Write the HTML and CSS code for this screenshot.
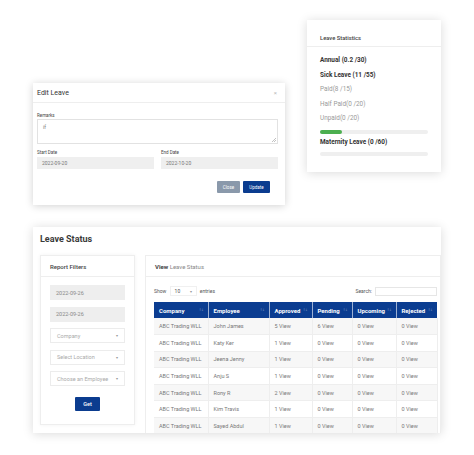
FILE: index.html
```html
<!DOCTYPE html>
<html lang="en">
<head>
    <meta charset="UTF-8">
    <meta name="viewport" content="width=device-width, initial-scale=1.0">
    <title>Leave Management</title>
    <link rel="stylesheet" href="styles.css">
</head>
<body>
<div class="canvas">

    <div class="top">
        <!-- edit leave modal -->
        <section class="modal">
            <div class="modal-head">
                <span>Edit Leave</span>
                <span class="modal-close">&times;</span>
            </div>
            <div class="modal-body">
                <div class="label remarks-label">Remarks</div>
                <div class="textarea">
                    if
                    <svg class="grip" width="4" height="4" viewBox="0 0 4 4"><path d="M4 0 L0 4 M4 2 L2 4" stroke="#999" stroke-width="0.6"/></svg>
                </div>
                <div class="dates">
                    <div>
                        <div class="label">Start Date</div>
                        <div class="input">2022-09-20</div>
                    </div>
                    <div>
                        <div class="label">End Date</div>
                        <div class="input">2022-10-20</div>
                    </div>
                </div>
                <div class="actions">
                    <span class="btn btn-grey">Close</span>
                    <span class="btn btn-blue">Update</span>
                </div>
            </div>
        </section>

        <!-- leave statistics -->
        <section class="stats">
            <div class="stats-head">Leave Statistics</div>
            <div class="stats-body">
                <div class="stat strong">Annual (0.2 /30)</div>
                <div class="stat strong">Sick Leave (11 /55)</div>
                <div class="stat muted">Paid(8 /15)</div>
                <div class="stat muted">Half Paid(0 /20)</div>
                <div class="stat muted">Unpaid(0 /20)</div>
                <div class="bar bar-first"><div class="bar-fill" style="width: 20%"></div></div>
                <div class="stat strong maternity">Maternity Leave (0 /60)</div>
                <div class="bar bar-last"><div class="bar-fill" style="width: 0%"></div></div>
            </div>
        </section>
    </div>

    <!-- leave status report -->
    <section class="status">
        <h1 class="status-title">Leave Status</h1>
        <div class="status-body">
            <aside class="filters">
                <div class="panel-head">Report Filters</div>
                <div class="filters-body">
                    <div class="field filled">2022-09-26</div>
                    <div class="field filled">2022-09-26</div>
                    <div class="field select">Company <span class="caret">&#9662;</span></div>
                    <div class="field select">Select Location <span class="caret">&#9662;</span></div>
                    <div class="field select">Choose an Employee <span class="caret">&#9662;</span></div>
                    <span class="btn-get">Get</span>
                </div>
            </aside>

            <div class="view">
                <div class="panel-head"><b>View</b>&nbsp;<span class="muted-head">Leave Status</span></div>
                <div class="toolbar">
                    <div class="length">Show <span class="length-box">10 <span class="caret">&#9662;</span></span> entries</div>
                    <div class="search">Search: <span class="search-box"></span></div>
                </div>
                <table class="grid">
                    <thead>
                        <tr>
                            <th style="width: 54px">Company <span class="sort">&uarr;&darr;</span></th>
                            <th style="width: 61px">Employee <span class="sort">&uarr;&darr;</span></th>
                            <th style="width: 43px">Approved <span class="sort">&uarr;&darr;</span></th>
                            <th style="width: 40px">Pending <span class="sort">&uarr;&darr;</span></th>
                            <th style="width: 44px">Upcoming <span class="sort">&uarr;&darr;</span></th>
                            <th style="width: 41px">Rejected <span class="sort">&uarr;&darr;</span></th>
                        </tr>
                    </thead>
                    <tbody>
                        <tr><td>ABC Trading WLL</td><td>John James</td><td>5 View</td><td>6 View</td><td>0 View</td><td>0 View</td></tr>
                        <tr><td>ABC Trading WLL</td><td>Katy Ker</td><td>1 View</td><td>0 View</td><td>0 View</td><td>0 View</td></tr>
                        <tr><td>ABC Trading WLL</td><td>Jeena Jenny</td><td>1 View</td><td>0 View</td><td>0 View</td><td>0 View</td></tr>
                        <tr><td>ABC Trading WLL</td><td>Anju S</td><td>1 View</td><td>0 View</td><td>0 View</td><td>0 View</td></tr>
                        <tr><td>ABC Trading WLL</td><td>Rony R</td><td>2 View</td><td>0 View</td><td>0 View</td><td>0 View</td></tr>
                        <tr><td>ABC Trading WLL</td><td>Kim Travis</td><td>1 View</td><td>0 View</td><td>0 View</td><td>0 View</td></tr>
                        <tr><td>ABC Trading WLL</td><td>Sayed Abdul</td><td>1 View</td><td>0 View</td><td>0 View</td><td>0 View</td></tr>
                    </tbody>
                </table>
            </div>
        </div>
    </section>

</div>
</body>
</html>
```

FILE: styles.css
```css
* {
    box-sizing: border-box;
}
body {
    margin: 0;
    background: #fff;
    font-family: Roboto, "Liberation Sans", sans-serif;
    color: #333;
}
.canvas {
    width: 474px;
    height: 455px;
    padding: 20px 0 0 33px;
}
.top {
    display: flex;
    align-items: flex-start;
}

/* modal */
.modal {
    width: 252px;
    height: 122px;
    margin-top: 63px;
    background: #fff;
    box-shadow: 0 1px 8px rgba(0, 0, 0, .18);
}
.modal-head {
    height: 20px;
    display: flex;
    align-items: center;
    justify-content: space-between;
    padding: 0 8px 0 4px;
    border-bottom: 1px solid #eee;
    font-size: 7px;
    color: #333;
}
.modal-close {
    color: #bbb;
    font-size: 6px;
}
.modal-body {
    padding: 0 7px 0 4px;
}
.label {
    font-size: 4.5px;
    line-height: 5px;
    color: #444;
}
.remarks-label {
    margin-top: 10px;
}
.textarea {
    position: relative;
    height: 25px;
    margin-top: 1px;
    padding: 4px 5px;
    border: 1px solid #e2e2e2;
    font-size: 5px;
    color: #777;
}
.grip {
    position: absolute;
    right: 1px;
    bottom: 1px;
}
.dates {
    display: grid;
    grid-template-columns: 1fr 1fr;
    gap: 7px;
    margin-top: 6px;
}
.input {
    height: 12px;
    margin-top: 2px;
    padding: 0 5px;
    display: flex;
    align-items: center;
    background: #efefef;
    font-size: 5px;
    color: #777;
}
.actions {
    display: flex;
    justify-content: flex-end;
    gap: 3px;
    margin: 12px 8px 0 0;
}
.btn {
    height: 12px;
    display: flex;
    align-items: center;
    justify-content: center;
    border-radius: 1px;
    font-size: 4.5px;
    color: #fff;
}
.btn-grey {
    width: 23px;
    background: #8a99ab;
}
.btn-blue {
    width: 27px;
    background: #0b3c8f;
}

/* statistics */
.stats {
    width: 134px;
    height: 152px;
    margin-left: 22px;
    background: #fff;
    box-shadow: 0 1px 10px rgba(0, 0, 0, .15);
}
.stats-head {
    height: 27px;
    padding: 14px 13px 0;
    line-height: 8px;
    border-bottom: 1px solid #eee;
    font-size: 5.8px;
    font-weight: 500;
    color: #444;
}
.stats-body {
    padding: 6px 13px 0;
}
.stat {
    font-size: 6.4px;
    line-height: 14.6px;
}
.stat.strong {
    font-weight: 700;
    color: #333;
}
.stat.muted {
    color: #9a9a9a;
}
.stat.maternity {
    line-height: 10px;
    margin-top: 3px;
}
.bar {
    height: 4px;
    background: #efefef;
    border-radius: 2px;
}
.bar-first {
    margin-top: 4px;
}
.bar-last {
    margin-top: 5px;
}
.bar-fill {
    height: 100%;
    background: #4caf50;
    border-radius: 2px;
}

/* leave status */
.status {
    width: 408px;
    height: 206px;
    margin-top: 22px;
    padding: 6px 0 0 7px;
    overflow: hidden;
    background: #fff;
    box-shadow: 0 1px 10px rgba(0, 0, 0, .15);
}
.status-title {
    margin: 0;
    font-size: 9px;
    line-height: 12px;
    font-weight: 700;
    color: #3a3a3a;
}
.status-body {
    display: flex;
    gap: 10px;
    margin-top: 10px;
}
.filters {
    flex: none;
    width: 95px;
    height: 170px;
    border: 1px solid #eee;
    box-shadow: 0 0 4px rgba(0, 0, 0, .05);
}
.panel-head {
    height: 21px;
    padding-left: 9px;
    display: flex;
    align-items: center;
    border-bottom: 1px solid #eee;
    font-size: 6px;
    font-weight: 500;
    color: #444;
}
.muted-head {
    font-weight: 400;
    color: #888;
}
.filters-body {
    padding: 8px 9px 0;
    display: flex;
    flex-direction: column;
    gap: 6.5px;
}
.field {
    height: 15px;
    padding: 0 6px;
    display: flex;
    align-items: center;
    justify-content: space-between;
    font-size: 5.5px;
    color: #888;
}
.field.filled {
    background: #eee;
}
.field.select {
    border: 1px solid #ececec;
    color: #aaa;
}
.caret {
    font-size: 4px;
    color: #999;
}
.btn-get {
    align-self: center;
    width: 25px;
    height: 14.5px;
    margin-top: 4px;
    display: flex;
    align-items: center;
    justify-content: center;
    border-radius: 1px;
    background: #0b3c8f;
    font-size: 5.5px;
    font-weight: 500;
    color: #fff;
}
.view {
    flex: 1;
    height: 200px;
    border: 1px solid #eee;
}
.toolbar {
    height: 10px;
    margin-top: 9px;
    padding: 0 3px 0 8px;
    display: flex;
    align-items: center;
    justify-content: space-between;
    font-size: 5px;
    color: #555;
}
.length-box {
    display: inline-flex;
    align-items: center;
    justify-content: space-between;
    width: 27px;
    height: 10px;
    margin: 0 2px;
    padding: 0 4px;
    border: 1px solid #f0f0f0;
}
.search {
    display: flex;
    align-items: center;
    gap: 3px;
}
.search-box {
    width: 62px;
    height: 9px;
    border: 1px solid #e6e6e6;
}
.grid {
    width: 283px;
    margin: 6px 0 0 8px;
    border-collapse: collapse;
    table-layout: fixed;
}
.grid th {
    height: 16px;
    padding: 0 4px 0 5px;
    background: #0b3d91;
    border-right: 1px solid rgba(255, 255, 255, .6);
    text-align: left;
    font-size: 6px;
    font-weight: 700;
    color: #fff;
    white-space: nowrap;
}
.sort {
    float: right;
    font-size: 4.5px;
    font-weight: 400;
    opacity: .6;
}
.grid td {
    height: 16.6px;
    padding: 0 5px;
    border-right: 1px solid #eee;
    border-bottom: 1px solid #eee;
    font-size: 5.5px;
    color: #777;
    white-space: nowrap;
}
.grid tbody tr:nth-child(odd) {
    background: #f7f7f7;
}
```
